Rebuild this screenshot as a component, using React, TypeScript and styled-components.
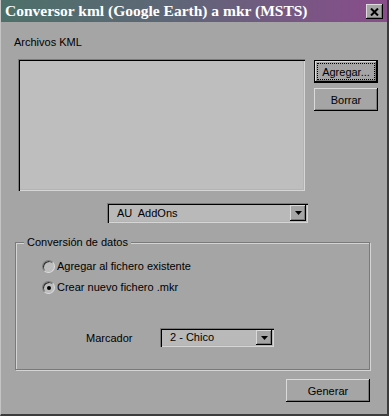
import styled, { createGlobalStyle } from 'styled-components';

const GlobalStyle = createGlobalStyle`
  html, body {
    margin: 0;
    padding: 0;
    background: #a5a5a5;
  }
  * {
    box-sizing: border-box;
  }
`;

const Window = styled.div`
  width: 389px;
  height: 416px;
  display: flex;
  flex-direction: column;
  background: #a5a5a5;
  border-left: 1px solid #c4c4c4;
  border-right: 2px solid #3c3c3c;
  border-bottom: 2px solid #3c3c3c;
  font-family: 'Liberation Sans', Arial, sans-serif;
  font-size: 11px;
  color: #000;
`;

const TitleBar = styled.div`
  height: 22px;
  flex: none;
  display: flex;
  align-items: center;
  justify-content: space-between;
  padding: 0 4px 0 4px;
  background: linear-gradient(90deg, #4d7069 0%, #5e6677 45%, #8a4c8c 100%);
  .title {
    color: #fff;
    font-family: 'Liberation Serif', 'Times New Roman', serif;
    font-weight: bold;
    font-size: 15.5px;
    white-space: nowrap;
  }
`;

const CloseButton = styled.button`
  width: 17px;
  height: 15px;
  padding: 0;
  margin-top: 1px;
  border: none;
  background: #a5a5a5;
  box-shadow:
    inset -1px -1px #000,
    inset 1px 1px #dcdcdc,
    inset -2px -2px #7a7a7a;
  display: flex;
  align-items: center;
  justify-content: center;
`;

const Body = styled.div`
  flex: 1;
  padding: 14px 0 0 13px;
`;

const SectionLabel = styled.div`
  line-height: 13px;
  height: 13px;
`;

const ListRow = styled.div`
  display: flex;
  align-items: flex-start;
  margin: 10px 0 0 4px;
`;

const ListBox = styled.div`
  width: 287px;
  height: 132px;
  background: #bebebe;
  box-shadow:
    inset 1px 1px #7b7b7b,
    inset 2px 2px #000,
    inset -1px -1px #d6d6d6,
    inset -2px -2px #b4b4b4;
`;

const ButtonColumn = styled.div`
  display: flex;
  flex-direction: column;
  gap: 5px;
  margin: 1px 0 0 9px;
`;

const Button = styled.button<{ $default?: boolean; $width?: number }>`
  width: ${(p) => p.$width ?? 64}px;
  height: 23px;
  padding: 0;
  border: ${(p) => (p.$default ? '1px solid #000' : 'none')};
  background: #a5a5a5;
  font-family: 'Liberation Sans', Arial, sans-serif;
  font-size: 11px;
  color: #000;
  box-shadow:
    inset -1px -1px #000,
    inset 1px 1px #dadada,
    inset -2px -2px #7a7a7a;
  display: flex;
  align-items: center;
  justify-content: center;
  .focus {
    display: flex;
    align-items: center;
    justify-content: center;
    width: calc(100% - 6px);
    height: calc(100% - 6px);
    outline: 1px dotted #000;
  }
`;

const ComboRow = styled.div`
  margin: 12px 0 0 93px;
`;

const Combo = styled.div<{ $width: number; $height: number }>`
  width: ${(p) => p.$width}px;
  height: ${(p) => p.$height}px;
  display: flex;
  align-items: center;
  justify-content: space-between;
  padding: 2px 2px 2px 10px;
  background: #b9b9b9;
  box-shadow:
    inset 1px 1px #7b7b7b,
    inset 2px 2px #000,
    inset -1px -1px #d6d6d6,
    inset -2px -2px #b4b4b4;
  .value {
    white-space: pre;
    line-height: 13px;
  }
`;

const DropButton = styled.div`
  width: 16px;
  height: 100%;
  flex: none;
  background: #a5a5a5;
  box-shadow:
    inset -1px -1px #000,
    inset 1px 1px #dadada,
    inset -2px -2px #7a7a7a;
  display: flex;
  align-items: center;
  justify-content: center;
`;

const GroupBox = styled.div`
  width: 355px;
  height: 128px;
  margin: 19px 0 0 1px;
  border: 1px solid #7a7a7a;
  box-shadow:
    inset 1px 1px #d4d4d4,
    1px 1px #d4d4d4;
`;

const Legend = styled.div`
  display: block;
  width: fit-content;
  margin: -7px 0 0 8px;
  padding: 0 3px;
  line-height: 13px;
  height: 13px;
  background: #a5a5a5;
`;

const RadioList = styled.div`
  display: flex;
  flex-direction: column;
  gap: 5px;
  margin: 9px 0 0 26px;
`;

const RadioRow = styled.label`
  display: flex;
  align-items: center;
  gap: 2px;
  height: 16px;
`;

const RadioDot = styled.span<{ $checked?: boolean }>`
  width: 13px;
  height: 13px;
  flex: none;
  border-radius: 50%;
  background: #bdbdbd;
  border: 1px solid;
  border-color: #7b7b7b #dcdcdc #dcdcdc #7b7b7b;
  box-shadow: inset 1px 1px #303030;
  display: flex;
  align-items: center;
  justify-content: center;
  &::after {
    content: '';
    width: 4px;
    height: 4px;
    border-radius: 50%;
    background: #000;
    display: ${(p) => (p.$checked ? 'block' : 'none')};
    margin: 1px 0 0 1px;
  }
`;

const MarkerRow = styled.div`
  display: flex;
  align-items: center;
  margin: 33px 0 0 70px;
  .label {
    width: 74px;
  }
`;

const Footer = styled.div`
  display: flex;
  margin: 9px 0 0 272px;
`;

function DownArrow() {
  return (
    <svg width="7" height="4" viewBox="0 0 7 4">
      <polygon points="0,0 7,0 3.5,4" fill="#000" />
    </svg>
  );
}

export default function App() {
  return (
    <>
      <GlobalStyle />
      <Window>
        <TitleBar>
          <span className="title">Conversor kml (Google Earth) a mkr (MSTS)</span>
          <CloseButton type="button" aria-label="Cerrar">
            <svg width="9" height="8" viewBox="0 0 9 8">
              <path d="M1 0.5 L8 7.5 M8 0.5 L1 7.5" stroke="#000" strokeWidth="2" />
            </svg>
          </CloseButton>
        </TitleBar>
        <Body>
          <SectionLabel>Archivos KML</SectionLabel>
          <ListRow>
            <ListBox />
            <ButtonColumn>
              <Button type="button" $default>
                <span className="focus">Agregar...</span>
              </Button>
              <Button type="button">Borrar</Button>
            </ButtonColumn>
          </ListRow>
          <ComboRow>
            <Combo $width={201} $height={20}>
              <span className="value">AU  AddOns</span>
              <DropButton>
                <DownArrow />
              </DropButton>
            </Combo>
          </ComboRow>
          <GroupBox>
            <Legend>Conversión de datos</Legend>
            <RadioList>
              <RadioRow>
                <RadioDot />
                Agregar al fichero existente
              </RadioRow>
              <RadioRow>
                <RadioDot $checked />
                Crear nuevo fichero .mkr
              </RadioRow>
            </RadioList>
            <MarkerRow>
              <span className="label">Marcador</span>
              <Combo $width={114} $height={19}>
                <span className="value">2 - Chico</span>
                <DropButton>
                  <DownArrow />
                </DropButton>
              </Combo>
            </MarkerRow>
          </GroupBox>
          <Footer>
            <Button type="button" $width={84}>
              Generar
            </Button>
          </Footer>
        </Body>
      </Window>
    </>
  );
}
